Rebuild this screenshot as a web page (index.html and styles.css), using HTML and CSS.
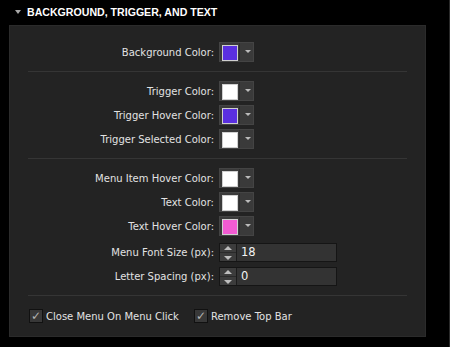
FILE: index.html
```html
<!DOCTYPE html>
<html lang="en">
<head>
<meta charset="UTF-8">
<title>Background, Trigger, and Text</title>
<link rel="stylesheet" href="styles.css">
</head>
<body>

<div class="section-head">
    <span class="caret"></span>
    <span class="section-title">BACKGROUND, TRIGGER, AND TEXT</span>
</div>

<div class="panel">
    <div class="group">
        <div class="row">
            <label>Background Color:</label>
            <div class="color-pick"><span class="swatch purple"></span><span class="drop"></span></div>
        </div>
    </div>

    <div class="sep"></div>

    <div class="group">
        <div class="row">
            <label>Trigger Color:</label>
            <div class="color-pick"><span class="swatch white"></span><span class="drop"></span></div>
        </div>
        <div class="row">
            <label>Trigger Hover Color:</label>
            <div class="color-pick"><span class="swatch purple"></span><span class="drop"></span></div>
        </div>
        <div class="row">
            <label>Trigger Selected Color:</label>
            <div class="color-pick"><span class="swatch white"></span><span class="drop"></span></div>
        </div>
    </div>

    <div class="sep"></div>

    <div class="group">
        <div class="row">
            <label>Menu Item Hover Color:</label>
            <div class="color-pick"><span class="swatch white"></span><span class="drop"></span></div>
        </div>
        <div class="row">
            <label>Text Color:</label>
            <div class="color-pick"><span class="swatch white"></span><span class="drop"></span></div>
        </div>
        <div class="row">
            <label>Text Hover Color:</label>
            <div class="color-pick"><span class="swatch pink"></span><span class="drop"></span></div>
        </div>
        <div class="row row-num">
            <label>Menu Font Size (px):</label>
            <div class="num-field"><span class="spin"><i class="up"></i><i class="down"></i></span><span class="num-value">18</span></div>
        </div>
        <div class="row row-num">
            <label>Letter Spacing (px):</label>
            <div class="num-field"><span class="spin"><i class="up"></i><i class="down"></i></span><span class="num-value">0</span></div>
        </div>
    </div>

    <div class="sep"></div>

    <div class="checks">
        <label class="check"><span class="box">&#10003;</span>Close Menu On Menu Click</label>
        <label class="check"><span class="box">&#10003;</span>Remove Top Bar</label>
    </div>
</div>

<div class="edge"></div>

</body>
</html>
```

FILE: styles.css
```css
/* dark options panel */
body {
    margin: 0;
    background-color: #000;
    font-family: "DejaVu Sans", Arial, sans-serif;
    font-size: 10px;
    color: #e2e2e2;
    height: 347px;
    overflow: hidden;
    position: relative;
}

.edge {
    position: absolute;
    top: 0;
    right: 0;
    width: 1px;
    height: 347px;
    background-color: #2a2a2a;
}

.section-head {
    height: 25px;
    display: flex;
    align-items: center;
    padding-left: 15px;
}

.caret {
    width: 0;
    height: 0;
    border-left: 3px solid transparent;
    border-right: 3px solid transparent;
    border-top: 4px solid #a8a8a8;
    margin-right: 6px;
    margin-top: -1px;
}

.section-title {
    font-family: "Liberation Sans", Arial, sans-serif;
    font-weight: bold;
    font-size: 10.6px;
    color: #fff;
    margin-top: -2px;
}

.panel {
    margin-left: 9px;
    width: 417px;
    height: 312px;
    box-sizing: border-box;
    padding: 16px 18px 0 18px;
    background-color: #232323;
    border: 1px solid #2b2b2b;
}

.group {
    display: flex;
    flex-direction: column;
    gap: 4px;
}

.row {
    display: grid;
    grid-template-columns: 186px auto;
    column-gap: 5px;
    align-items: center;
    height: 20px;
}

.row label {
    text-align: right;
    white-space: nowrap;
}

.row-num {
    height: 19px;
}

.row + .row-num {
    margin-top: 3px;
}

.row-num + .row-num {
    margin-top: 1px;
}

.sep {
    height: 1px;
    background-color: #353535;
    margin: 9px 0;
}

.color-pick {
    display: flex;
    width: 35px;
    height: 20px;
    box-sizing: border-box;
    background-color: #3a3a3a;
    border: 1px solid #444;
}

.swatch {
    width: 14px;
    height: 14px;
    margin: 2px 0 0 2px;
    border: 1px solid #cfcfcf;
}

.swatch.purple { background-color: #5a2fe0; }
.swatch.white { background-color: #fff; }
.swatch.pink { background-color: #f25bd2; }

.drop {
    flex: 1;
    position: relative;
    border-left: 1px solid #2e2e2e;
    margin-left: 1px;
}

.drop::after {
    content: "";
    position: absolute;
    left: 5px;
    top: 7px;
    border-left: 3px solid transparent;
    border-right: 3px solid transparent;
    border-top: 3px solid #bcbcbc;
}

.num-field {
    display: flex;
    width: 118px;
    height: 19px;
    box-sizing: border-box;
    border: 1px solid #151515;
    background-color: #333;
}

.spin {
    width: 16px;
    display: flex;
    flex-direction: column;
    background-color: #3c3c3c;
    border-right: 1px solid #1c1c1c;
}

.spin i {
    flex: 1;
    position: relative;
}

.spin i::after {
    content: "";
    position: absolute;
    left: 4px;
    border-left: 4px solid transparent;
    border-right: 4px solid transparent;
}

.spin .up {
    border-bottom: 1px solid #2a2a2a;
}

.spin .up::after {
    top: 2px;
    border-bottom: 4px solid #bdbdbd;
}

.spin .down::after {
    top: 3px;
    border-top: 4px solid #bdbdbd;
}

.num-value {
    padding-left: 4px;
    line-height: 17px;
    color: #f2f2f2;
    font-size: 11.5px;
}

.checks {
    display: flex;
    gap: 15px;
    padding-top: 4px;
    padding-left: 1px;
}

.check {
    display: flex;
    align-items: center;
    gap: 3px;
}

.box {
    width: 14px;
    height: 14px;
    box-sizing: border-box;
    border: 1px solid #111;
    background-color: #383838;
    color: #b5b5b5;
    font-size: 12px;
    line-height: 13px;
    text-align: center;
}
```
